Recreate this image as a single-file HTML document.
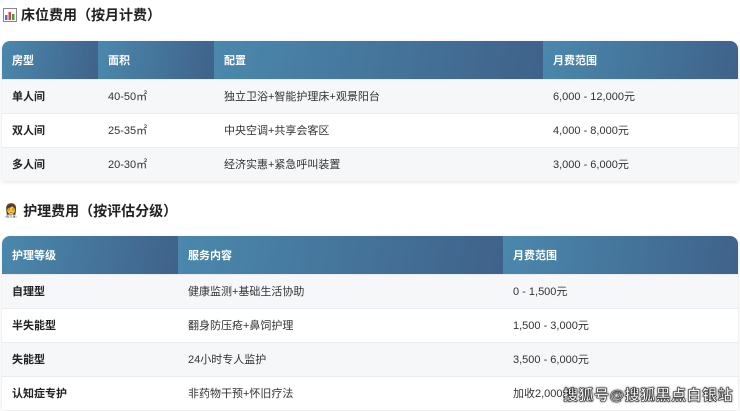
<!DOCTYPE html>
<html><head><meta charset="utf-8"><style>
*{margin:0;padding:0;box-sizing:border-box}
body{width:740px;height:411px;overflow:hidden;background:#fff;font-family:"Liberation Sans","Noto Sans CJK SC",sans-serif;color:#333;position:relative}
h2{position:absolute;left:3px;font-size:14px;font-weight:bold;color:#222;display:flex;align-items:center;gap:4px}
table{position:absolute;left:2px;width:736px;border-collapse:collapse;font-size:11px;border-radius:8px 8px 0 0;overflow:hidden;box-shadow:0 1px 4px rgba(0,0,0,.12)}
th{background:linear-gradient(100deg,#4b88ad,#3f628a);color:#fff;text-align:left;font-weight:bold;padding:0 0 0 10px;height:38px;font-size:11px}
td{padding:0 0 0 10px;height:34px;border-top:1px solid #e8ebef}
tr:nth-child(even) td{background:#f6f7f9}
td:first-child{font-weight:bold;color:#222}
.wm{position:absolute;left:563px;top:384px;font-size:15px;font-weight:bold;color:#fff;-webkit-text-stroke:0.6px #333;text-shadow:0 0 2px #000;letter-spacing:0.5px}
</style></head><body>
<h2 style="top:5px"><svg width="14" height="14" viewBox="0 0 14 14"><rect x="0.5" y="0.5" width="13" height="13" fill="#fff" stroke="#888"/><rect x="2" y="7" width="2.5" height="5" fill="#3a7bd5"/><rect x="5.5" y="4" width="2.5" height="8" fill="#e04040"/><rect x="9" y="6" width="2.5" height="6" fill="#40a040"/></svg>床位费用（按月计费）</h2>
<table style="top:41px">
<tr><th style="width:96px">房型</th><th style="width:116px">面积</th><th style="width:329px">配置</th><th>月费范围</th></tr>
<tr><td>单人间</td><td>40-50㎡</td><td>独立卫浴+智能护理床+观景阳台</td><td>6,000 - 12,000元</td></tr>
<tr><td>双人间</td><td>25-35㎡</td><td>中央空调+共享会客区</td><td>4,000 - 8,000元</td></tr>
<tr><td>多人间</td><td>20-30㎡</td><td>经济实惠+紧急呼叫装置</td><td>3,000 - 6,000元</td></tr>
</table>
<h2 style="top:201px"><span style="font-size:13px">👩‍⚕️</span>护理费用（按评估分级）</h2>
<table style="top:236px">
<tr><th style="width:176px">护理等级</th><th style="width:325px">服务内容</th><th>月费范围</th></tr>
<tr><td>自理型</td><td>健康监测+基础生活协助</td><td>0 - 1,500元</td></tr>
<tr><td>半失能型</td><td>翻身防压疮+鼻饲护理</td><td>1,500 - 3,000元</td></tr>
<tr><td>失能型</td><td>24小时专人监护</td><td>3,500 - 6,000元</td></tr>
<tr><td>认知症专护</td><td>非药物干预+怀旧疗法</td><td>加收2,000元</td></tr>
</table>
<div class="wm">搜狐号@搜狐黑点白银站</div>
</body></html>
